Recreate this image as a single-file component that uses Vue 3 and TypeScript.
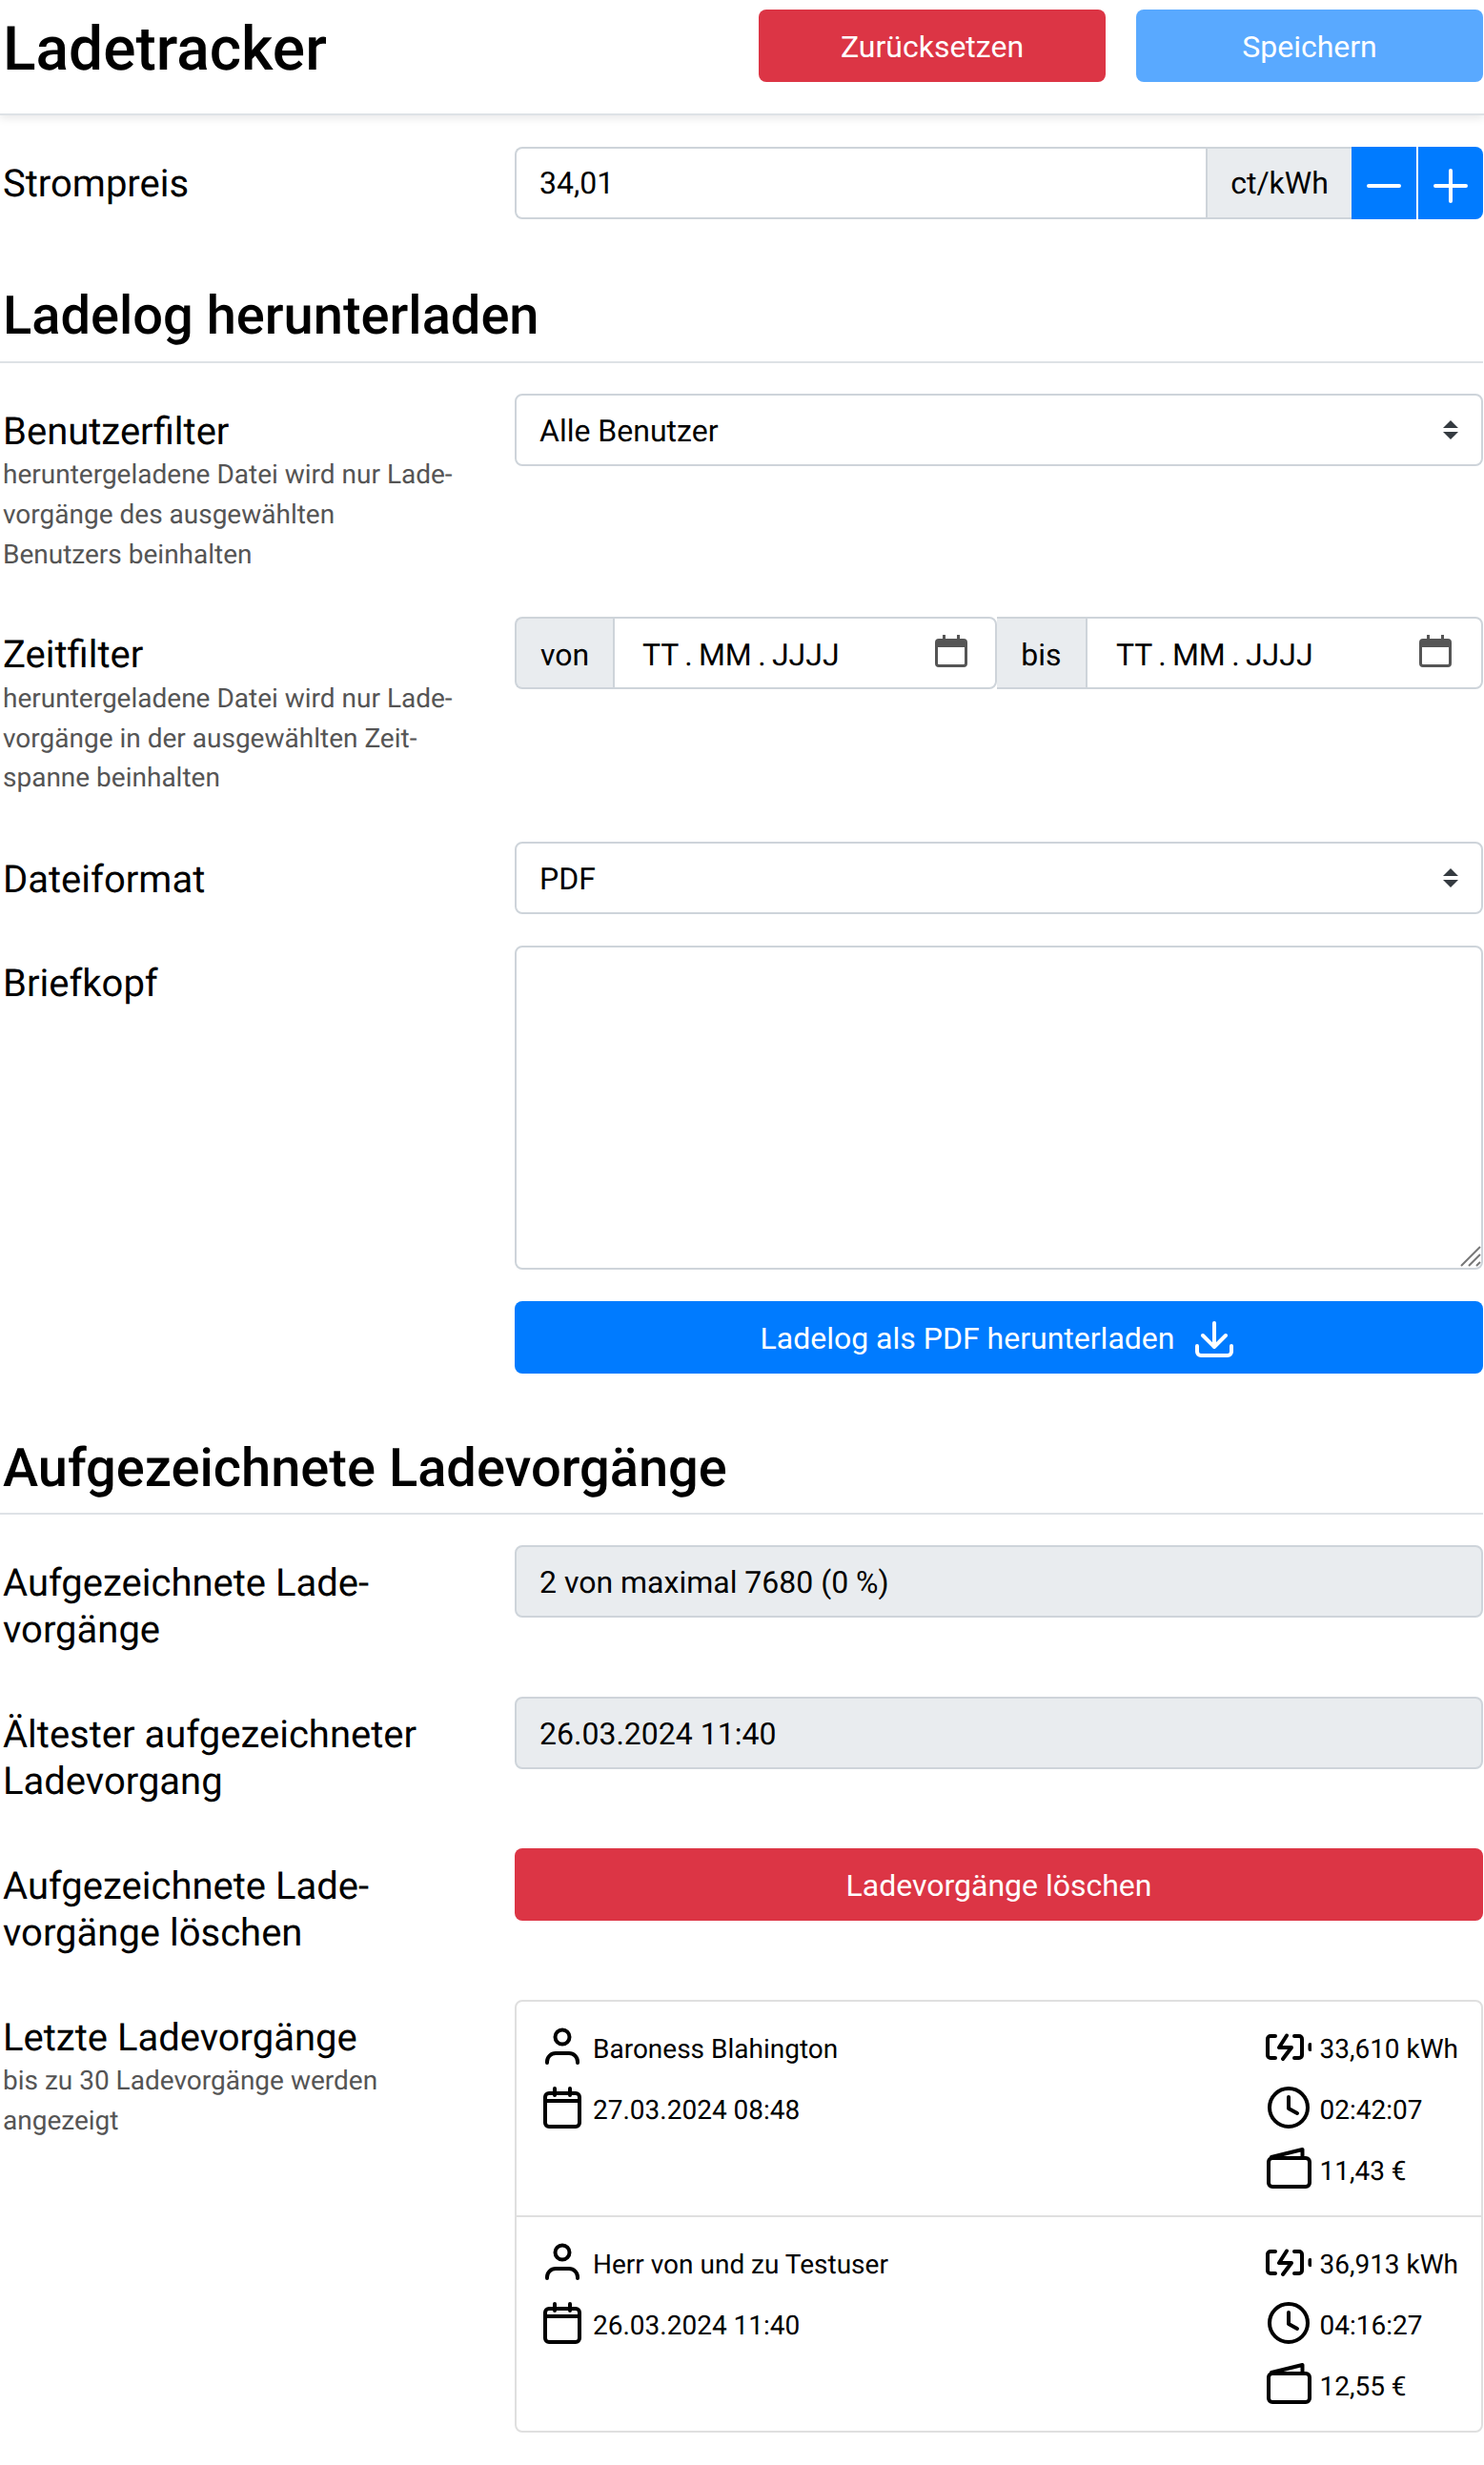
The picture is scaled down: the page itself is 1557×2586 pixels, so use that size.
<script setup lang="ts">
interface Session {
  user: string
  date: string
  energy: string
  time: string
  cost: string
}

const sessions: Session[] = [
  { user: 'Baroness Blahington', date: '27.03.2024 08:48', energy: '33,610 kWh', time: '02:42:07', cost: '11,43 €' },
  { user: 'Herr von und zu Testuser', date: '26.03.2024 11:40', energy: '36,913 kWh', time: '04:16:27', cost: '12,55 €' },
]
</script>

<template>
  <div class="page">
    <header class="topbar">
      <h1 class="title">Ladetracker</h1>
      <div class="actions">
        <button class="btn danger" type="button">Zurücksetzen</button>
        <button class="btn primary disabled" type="button">Speichern</button>
      </div>
    </header>

    <main class="content">
      <div class="row price-row">
        <div class="label">Strompreis</div>
        <div class="group">
          <div class="field grow first">34,01</div>
          <div class="addon unit">ct/kWh</div>
          <button class="step minus" type="button" aria-label="weniger">
            <svg viewBox="0 0 48 48" width="48" height="48"><path d="M8 27H40" /></svg>
          </button>
          <button class="step plus" type="button" aria-label="mehr">
            <svg viewBox="0 0 48 48" width="48" height="48"><path d="M8 27H40M24 11V43" /></svg>
          </button>
        </div>
      </div>

      <h2 class="section">Ladelog herunterladen</h2>

      <div class="row">
        <div class="label">
          Benutzerfilter
          <small>heruntergeladene Datei wird nur Lade-<br />vorgänge des ausgewählten<br />Benutzers beinhalten</small>
        </div>
        <div class="field select">
          Alle Benutzer
          <svg class="updown" viewBox="0 0 16 20" width="16" height="20"><path d="M8 0L16 8H0ZM8 20L0 12H16Z" /></svg>
        </div>
      </div>

      <div class="row time-row">
        <div class="label">
          Zeitfilter
          <small>heruntergeladene Datei wird nur Lade-<br />vorgänge in der ausgewählten Zeit-<br />spanne beinhalten</small>
        </div>
        <div class="group dates">
          <div class="addon von">von</div>
          <div class="date d1">
            <span class="mask">TT . MM . JJJJ</span>
            <svg viewBox="0 0 34 34" width="34" height="34"><path class="cal" d="M8 0h3v4h12V0h3v4h4a4 4 0 0 1 4 4v22a4 4 0 0 1-4 4H4a4 4 0 0 1-4-4V8a4 4 0 0 1 4-4h4ZM3 13v17a1 1 0 0 0 1 1h26a1 1 0 0 0 1-1V13Z" /></svg>
          </div>
          <div class="addon bis">bis</div>
          <div class="date d2">
            <span class="mask">TT . MM . JJJJ</span>
            <svg viewBox="0 0 34 34" width="34" height="34"><path class="cal" d="M8 0h3v4h12V0h3v4h4a4 4 0 0 1 4 4v22a4 4 0 0 1-4 4H4a4 4 0 0 1-4-4V8a4 4 0 0 1 4-4h4ZM3 13v17a1 1 0 0 0 1 1h26a1 1 0 0 0 1-1V13Z" /></svg>
          </div>
        </div>
      </div>

      <div class="row format-row">
        <div class="label">Dateiformat</div>
        <div class="field select">
          PDF
          <svg class="updown" viewBox="0 0 16 20" width="16" height="20"><path d="M8 0L16 8H0ZM8 20L0 12H16Z" /></svg>
        </div>
      </div>

      <div class="row head-row">
        <div class="label">Briefkopf</div>
        <div class="letterhead">
          <svg class="grip" viewBox="0 0 22 22" width="22" height="22">
            <path d="M1 21L21 1M9 21L21 9M17 21L21 17" />
          </svg>
        </div>
      </div>

      <div class="row">
        <div></div>
        <button class="btn primary wide" type="button">
          Ladelog als PDF herunterladen
          <svg class="stroke-white" viewBox="0 0 48 48" width="48" height="48">
            <path d="M24 6V30M12 19L24 31L36 19M6 30v6a4 4 0 0 0 4 4h28a4 4 0 0 0 4-4v-6" />
          </svg>
        </button>
      </div>

      <h2 class="section second">Aufgezeichnete Ladevorgänge</h2>

      <div class="row">
        <div class="label">Aufgezeichnete Lade-<br />vorgänge</div>
        <div class="field readonly">2 von maximal 7680 (0 %)</div>
      </div>

      <div class="row">
        <div class="label">Ältester aufgezeichneter<br />Ladevorgang</div>
        <div class="field readonly">26.03.2024 11:40</div>
      </div>

      <div class="row">
        <div class="label">Aufgezeichnete Lade-<br />vorgänge löschen</div>
        <button class="btn danger wide" type="button">Ladevorgänge löschen</button>
      </div>

      <div class="row">
        <div class="label">
          Letzte Ladevorgänge
          <small>bis zu 30 Ladevorgänge werden<br />angezeigt</small>
        </div>
        <ul class="list">
          <li v-for="s in sessions" :key="s.date" class="item">
            <div class="col">
              <div class="line">
                <svg class="ico" viewBox="0 0 48 48" width="48" height="48">
                  <circle cx="24" cy="13" r="7.5" />
                  <path d="M8 40v-1a9 9 0 0 1 9-9h14a9 9 0 0 1 9 9v1" />
                </svg>
                <span>{{ s.user }}</span>
              </div>
              <div class="line">
                <svg class="ico" viewBox="0 0 48 48" width="48" height="48">
                  <rect x="6" y="8" width="36" height="35" rx="4" />
                  <path d="M6 16H42M16 3V10M32 3V10" />
                </svg>
                <span>{{ s.date }}</span>
              </div>
            </div>
            <div class="col">
              <div class="line">
                <svg class="ico" viewBox="0 0 48 48" width="48" height="48">
                  <path d="M10 12H5a3 3 0 0 0-3 3v17a3 3 0 0 0 3 3h5M30 12h5a3 3 0 0 1 3 3v17a3 3 0 0 1-3 3h-5M22 11.500L14 24H27L18 36M46.500 21V26" />
                </svg>
                <span>{{ s.energy }}</span>
              </div>
              <div class="line">
                <svg class="ico" viewBox="0 0 48 48" width="48" height="48">
                  <circle cx="24" cy="23" r="20" />
                  <path d="M24 12V24L33 29" />
                </svg>
                <span>{{ s.time }}</span>
              </div>
              <div class="line">
                <svg class="ico" viewBox="0 0 48 48" width="48" height="48">
                  <rect x="3" y="12" width="43" height="30" rx="4" />
                  <path d="M6 11L38.500 3V11" />
                </svg>
                <span>{{ s.cost }}</span>
              </div>
            </div>
          </li>
        </ul>
      </div>
    </main>
  </div>
</template>

<style scoped>
.page {
  font-family: Roboto, "Liberation Sans", sans-serif;
  font-size: 32px;
  line-height: 48px;
  color: #000;
  background: #fff;
  min-height: 2586px;
  text-rendering: geometricPrecision;
}

.topbar {
  display: flex;
  align-items: flex-start;
  justify-content: space-between;
  box-sizing: border-box;
  height: 121px;
  padding: 10px 1px 0 3px;
  border-bottom: 2px solid #dee2e6;
  box-shadow: 0 4px 8px rgba(0, 0, 0, 0.08);
}

.title {
  margin: 3px 0 0;
  font-size: 64px;
  line-height: 77px;
  font-weight: 500;
}

.actions {
  display: flex;
  gap: 32px;
}

.actions .btn {
  width: 364px;
}

.btn {
  display: flex;
  align-items: center;
  justify-content: center;
  gap: 18px;
  height: 76px;
  padding: 2px 24px 0;
  border: 0;
  border-radius: 8px;
  font: inherit;
  color: #fff;
}

.btn svg {
  margin-top: 4px;
}

.danger {
  background: #dc3545;
}

.primary {
  background: #007bff;
}

.disabled {
  background: #59a9ff;
}

.content {
  padding: 33px 1px 0 3px;
}

.row {
  display: grid;
  grid-template-columns: 537px 1fr;
  margin-bottom: 32px;
}

.time-row {
  margin-bottom: 33px;
}

.format-row {
  margin-bottom: 31px;
}

.head-row {
  margin-bottom: 33px;
}

.label {
  padding: 15px 0 13px;
  font-size: 40px;
  line-height: 49.5px;
}

.price-row .label {
  padding: 14px 0;
}

.price-row .field,
.price-row .addon {
  padding-top: 12px;
  padding-bottom: 12px;
}

.label small {
  display: block;
  font-size: 28px;
  line-height: 41.8px;
  color: #555;
}

.section {
  margin: 66px 0 32px -3px;
  padding: 0 0 14px 3px;
  border-bottom: 2px solid #dee2e6;
  font-size: 56px;
  line-height: 67px;
  font-weight: 500;
}

.second {
  padding-bottom: 13px;
}

.field {
  box-sizing: border-box;
  height: 76px;
  padding: 13px 24px 11px;
  border: 2px solid #ced4da;
  border-radius: 8px;
  position: relative;
}

.readonly {
  background: #e9ecef;
}

.updown {
  position: absolute;
  right: 24px;
  top: 26px;
  fill: #343a40;
}

.group {
  display: flex;
  height: 76px;
}

.grow {
  flex: 1;
  border-radius: 8px 0 0 8px;
  border-right: 0;
}

.addon {
  box-sizing: border-box;
  border: 2px solid #ced4da;
  background: #e9ecef;
  padding: 14px 24px 10px;
  height: 76px;
  text-align: center;
}

.unit {
  width: 153px;
  padding-left: 0;
  padding-right: 0;
  border-right: 0;
}

.step {
  width: 68px;
  height: 76px;
  padding: 0;
  border: 0;
  background: #007bff;
  display: flex;
  align-items: center;
  justify-content: center;
}

.step svg {
  fill: none;
  stroke: #fff;
  stroke-width: 4;
  stroke-linecap: round;
}

.minus {
  margin-right: 2px;
}

.plus {
  border-radius: 0 8px 8px 0;
}

.von {
  width: 103px;
  border-radius: 8px 0 0 8px;
  border-right: 0;
  padding-left: 0;
  padding-right: 0;
}

.bis {
  width: 93px;
  padding-left: 0;
  padding-right: 0;
  border-left: 0;
  border-right: 0;
}

.date {
  box-sizing: border-box;
  display: flex;
  align-items: center;
  justify-content: space-between;
  border: 2px solid #ced4da;
}

.mask {
  word-spacing: -1.6px;
  padding-top: 4px;
}

.d1 {
  width: 403px;
  padding: 0 29px 0 29px;
  border-radius: 0 8px 8px 0;
}

.d2 {
  flex: 1;
  padding: 0 31px 0 30px;
  border-radius: 0 8px 8px 0;
}

.date svg {
  margin-top: -4px;
}

.cal {
  fill: #555;
  fill-rule: evenodd;
}

.letterhead {
  position: relative;
  box-sizing: border-box;
  height: 340px;
  border: 2px solid #ced4da;
  border-radius: 8px;
}

.grip {
  position: absolute;
  right: 0;
  bottom: 1px;
  fill: none;
  stroke: #777;
  stroke-width: 2;
}

.stroke-white {
  fill: none;
  stroke: #fff;
  stroke-width: 4;
  stroke-linecap: round;
  stroke-linejoin: round;
}

.list {
  list-style: none;
  margin: 0;
  padding: 0;
  border: 2px solid #dfdfdf;
  border-radius: 8px;
}

.item {
  display: flex;
  justify-content: space-between;
  height: 224px;
  box-sizing: content-box;
  padding: 0 24px;
}

.item + .item {
  border-top: 2px solid #dfdfdf;
}

.col {
  padding-top: 16px;
}

.line {
  display: flex;
  align-items: center;
  height: 64px;
  gap: 8px;
  font-size: 28px;
}

.line span {
  padding-top: 4px;
}

.ico {
  flex: none;
  fill: none;
  stroke: #000;
  stroke-width: 4;
  stroke-linecap: round;
  stroke-linejoin: round;
}
</style>
